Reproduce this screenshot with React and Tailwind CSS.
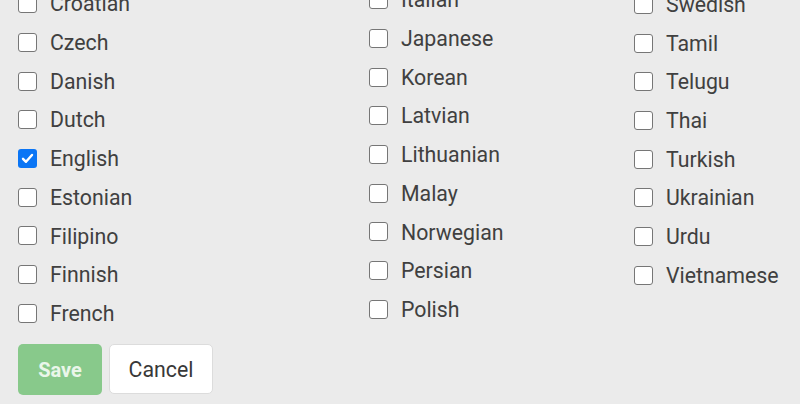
import React from 'react'

const col1 = ['Croatian', 'Czech', 'Danish', 'Dutch', 'English', 'Estonian', 'Filipino', 'Finnish', 'French']
const col2 = ['Italian', 'Japanese', 'Korean', 'Latvian', 'Lithuanian', 'Malay', 'Norwegian', 'Persian', 'Polish']
const col3 = ['Swedish', 'Tamil', 'Telugu', 'Thai', 'Turkish', 'Ukrainian', 'Urdu', 'Vietnamese']

function Box({ checked }) {
  if (checked) {
    return (
      <span className="w-[19px] h-[19px] rounded-[3px] bg-[#0a75f5] flex items-center justify-center shrink-0">
        <svg width="13" height="13" viewBox="0 0 13 13">
          <path d="M2 6.8 L5 9.8 L11 3" fill="none" stroke="white" strokeWidth="2.4" strokeLinecap="round" strokeLinejoin="round" />
        </svg>
      </span>
    )
  }
  return <span className="w-[19px] h-[19px] rounded-[3px] border-[1.5px] border-[#767676] bg-white shrink-0" />
}

function Column({ items, className }) {
  return (
    <div className={className}>
      {items.map((name) => (
        <label key={name} className="h-[38.7px] flex items-center gap-[13px]">
          <Box checked={name === 'English'} />
          <span className="pt-[1px]">{name}</span>
        </label>
      ))}
    </div>
  )
}

export default function App() {
  return (
    <div className="w-[800px] h-[404px] overflow-hidden bg-[#ebebeb] text-[#404040] text-[21.3px] pl-[18px] font-['Roboto',sans-serif]">
      <div className="flex">
        <Column items={col1} className="w-[351px] -mt-[15.5px]" />
        <Column items={col2} className="w-[265px] -mt-[19.5px]" />
        <Column items={col3} className="-mt-[15px]" />
      </div>
      <div className="flex gap-[7px] mt-[11px]">
        <button className="w-[84px] h-[51px] pt-[2px] rounded-[5px] bg-[#88c98b] text-[#eaf6ea] font-bold text-[20px]">Save</button>
        <button className="w-[104px] h-[50px] pt-[3px] rounded-[5px] bg-white border border-[#dcdcdc] text-[#383838] text-[21.3px]">Cancel</button>
      </div>
    </div>
  )
}
